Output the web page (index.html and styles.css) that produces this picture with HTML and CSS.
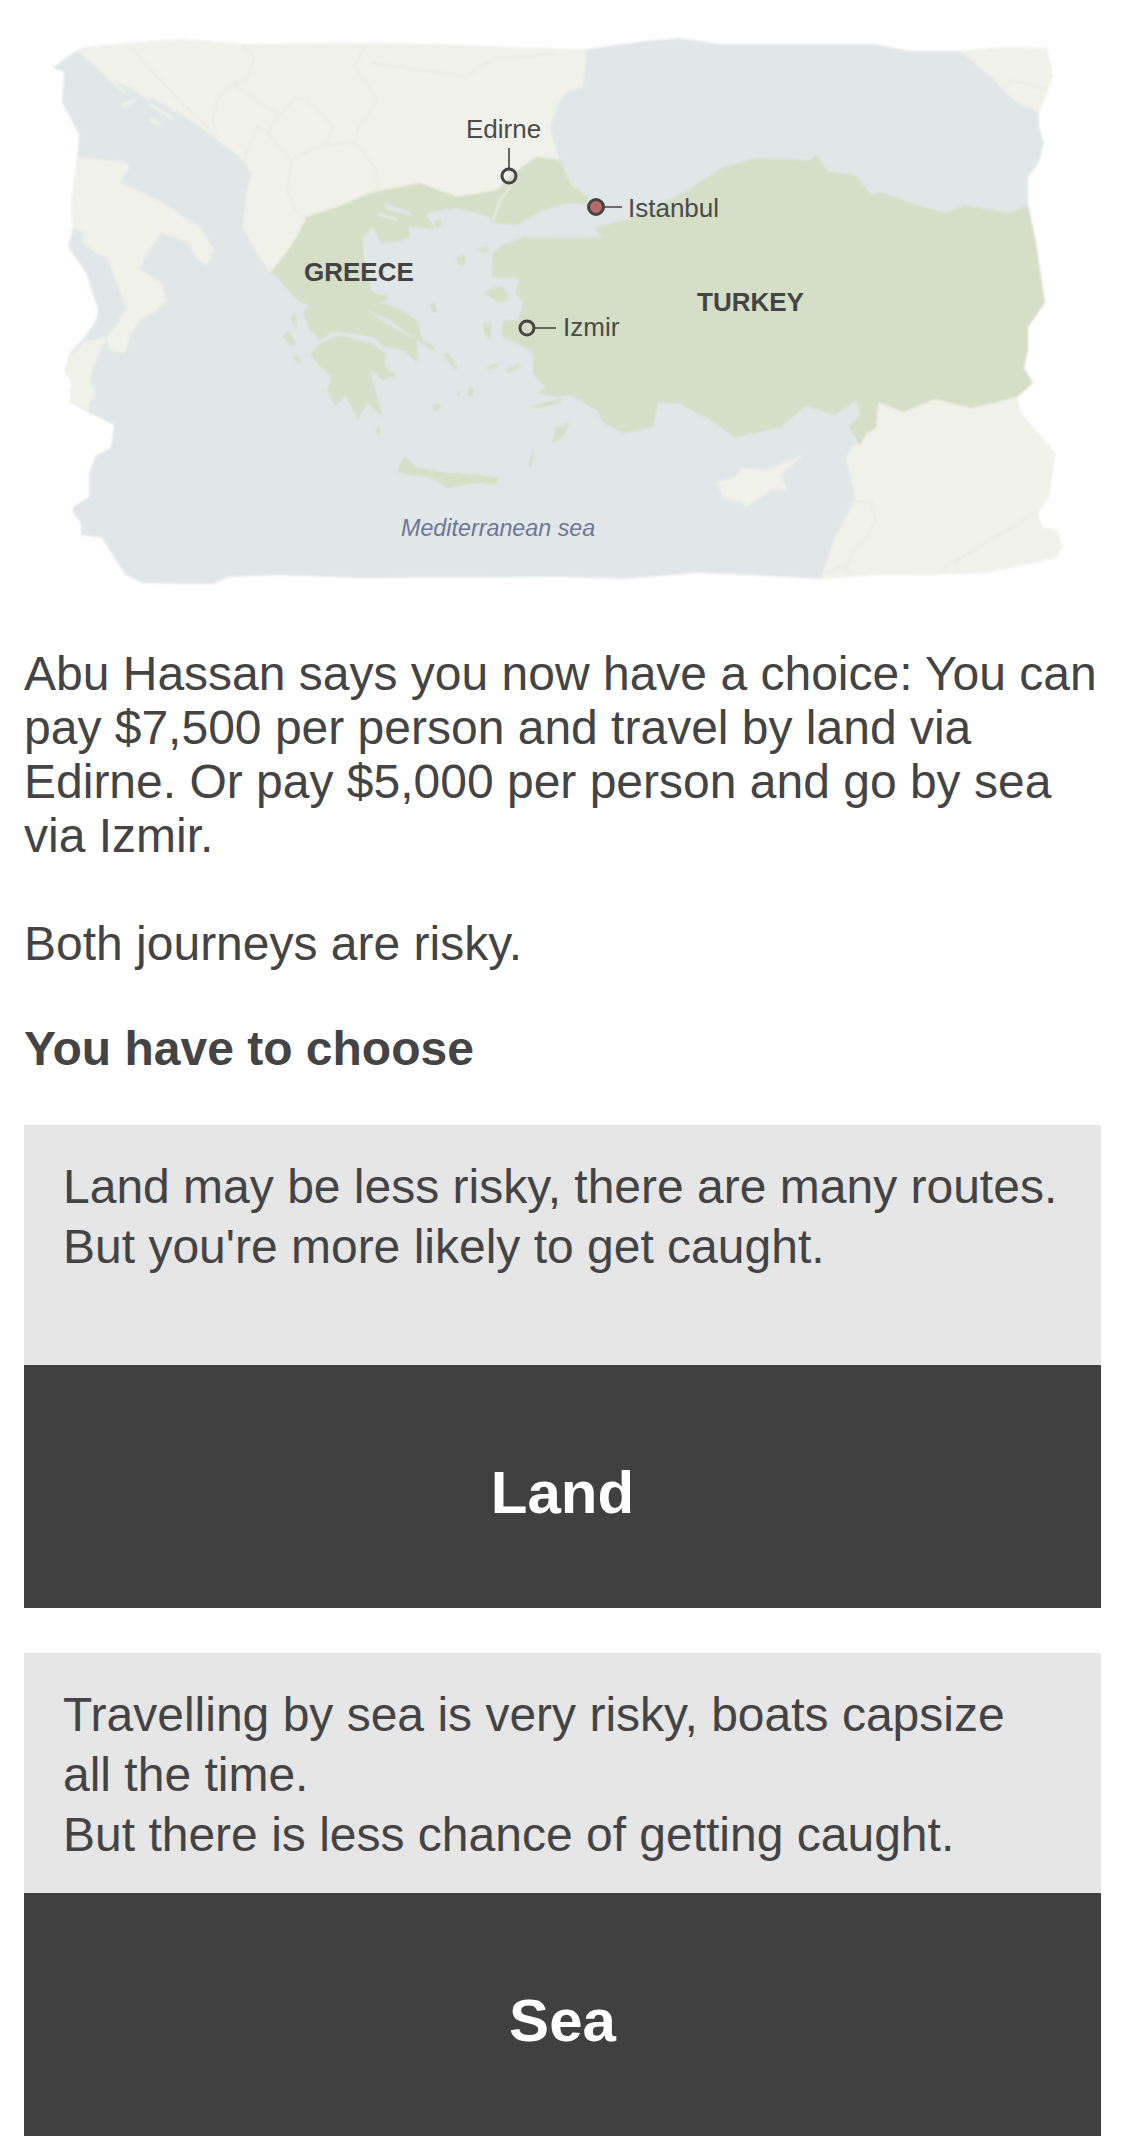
FILE: index.html
```html
<!DOCTYPE html>
<html lang="en">
<head>
<meta charset="utf-8">
<title>You have to choose</title>
<link rel="stylesheet" href="styles.css">
</head>
<body>
<figure class="map">
<svg class="map-svg" viewBox="0 0 1125 620" width="1125" height="620" role="img" aria-label="Map of Greece and Turkey">
<defs><filter id="soft" x="-2%" y="-2%" width="104%" height="104%"><feGaussianBlur stdDeviation="0.8"/></filter></defs>
<g filter="url(#soft)">
<path class="sea" d="M52 68L77 50L86 47L179 39L243 44L364 43L429 44L560 49L587 49L646 41L678 38L721 44L874 44L910 51L960 51L1006 47L1047 48L1053 77L1039 112L1039 127L1044 143L1039 163L1028 177L1028 205L1035 237L1045 303L1028 327L1028 350L1024 368L1033 383L1017 397L1021 413L1055 453L1049 497L1038 513L1042 527L1057 530L1062 547L1056 558L985 573L917 575L874 575L821 579L749 575L696 573L624 579L560 577L357 578L279 575L229 577L214 584L143 583L125 575L102 538L81 535L81 523L73 513L73 507L89 497L89 473L96 455L111 448L114 425L89 413L70 402L71 380L64 372L70 353L84 338L96 320L98 310L86 273L68 247L73 227L71 207L77 157L79 135L62 102L64 72Z"/>
<path class="land" d="M77 157L125 162L129 167L120 182L161 202L200 227L214 250L207 265L196 258L189 243L161 233L143 260L141 270L162 283L166 302L157 310L139 320L130 337L125 353L109 350L107 337L118 323L123 313L127 310L118 287L107 257L96 253L82 242L84 233L73 227L71 207Z"/>
<path class="land" d="M107 337L84 342L70 357L64 372L71 380L70 400L89 412L89 403L96 395L91 383L93 367Z"/>
<path class="land" d="M77 50L86 47L179 39L243 44L364 43L429 44L560 49L587 49L583 87L567 92L560 100L550 127L554 143L560 160L536 157L511 175L497 190L457 197L420 183L370 193L337 207L307 217L297 237L283 257L270 273L257 253L243 227L246 193L252 173L243 160L214 137L186 117L150 97L107 77Z"/>
<path class="land" d="M960 51L1006 47L1047 48L1053 77L1039 112L1021 105L1010 97L994 80L971 60Z"/>
<path class="land" d="M1017 397L1021 413L1055 453L1049 497L1038 513L1042 527L1057 530L1062 547L1056 558L985 573L917 575L874 575L821 579L835 537L855 500L851 477L846 460L853 445L860 445L867 433L876 428L878 402L903 412L935 399L971 408Z"/>
<path class="land" d="M717 482L735 477L742 468L767 470L803 455L781 475L787 490L771 490L746 507L742 502L724 498Z"/>
<path class="land-line" d="M107 77L125 92M130 85L150 100M150 105L172 118M122 106L136 100M150 120L160 124"/>
<path class="green" d="M270 273L283 257L297 237L307 217L337 207L370 193L420 183L457 197L497 190L511 175L536 157L560 160L571 185L589 197L585 205L570 203L543 210L517 225L492 223L490 217L457 208L433 212L407 220L410 237L397 242L380 243L373 227L363 237L363 253L372 292L390 297L383 302L362 308L393 327L403 333L417 340L417 363L403 350L383 347L373 337L347 333L333 332L320 340L310 330L303 313L308 305L297 300L277 277Z"/>
<path class="green" d="M370 195L420 205L435 230L400 225L365 215Z"/>
<path class="sea" d="M384 203L410 212L412 216L386 209ZM378 212L398 219L396 221L378 216Z"/>
<path class="green" d="M383 303L397 308L417 320L423 340L435 347L433 351L417 340L403 330L390 320L370 312L362 308Z"/>
<path class="green" d="M310 355L320 343L340 335L370 343L385 353L385 367L397 375L383 380L370 370L383 418L367 403L358 420L345 395L335 407L327 390L332 377L320 367Z"/>
<path class="green" d="M398 473L400 463L405 457L417 467L443 472L480 475L498 477L497 485L477 483L447 488L430 477L410 475Z"/>
<path class="green" d="M624 220L631 218L685 192L721 168L756 158L810 160L817 155L828 172L856 175L871 195L881 192L917 205L946 213L964 205L1010 213L1028 205L1035 237L1045 303L1028 327L1028 350L1024 368L1033 383L1017 397L971 408L935 399L903 412L878 402L876 428L867 433L860 445L849 427L860 415L856 400L835 415L806 406L781 427L735 438L714 422L678 403L658 403L653 427L624 433L603 423L596 410L570 395L557 397L537 393L545 388L533 373L533 353L517 343L502 337L503 320L518 320L523 303L515 292L520 278L492 277L493 253L503 245L523 237L570 238L603 237L594 228Z"/>
<path class="green" d="M483 292L502 285L510 300L497 302ZM483 323L492 323L490 340L485 335ZM553 443L555 428L570 422L563 437ZM433 222L440 219L443 225L436 228ZM478 250L488 246L488 252L480 253ZM455 258L465 255L466 264L459 266ZM430 305L435 303L438 312L432 312ZM443 354L448 352L458 368L454 370ZM487 367L497 363L498 366L488 370ZM468 388L473 386L473 396L468 397ZM456 394L462 390L458 398ZM433 405L441 403L439 411L432 410ZM527 407L545 402L563 398L560 403L540 408ZM528 467L533 447L534 456L531 467ZM283 337L288 330L297 345L289 345ZM293 357L298 355L302 363L296 362ZM376 426L381 428L380 435L376 434ZM290 318L296 312L296 328ZM505 370L520 363L521 367L508 373Z"/>
<path class="border" d="M130 48L182 103L214 133M243 45L255 57L246 82L232 83L218 97L212 120L216 132M232 83L279 115L296 97L307 100L334 127L323 145L354 142L375 167L377 190M364 47L355 67L377 100L359 127L354 142M371 63L436 72L464 77L493 60L560 53M243 163L257 127L268 133L279 115M268 133L291 160L288 193L296 212L307 217M291 160L314 148L323 145M1001 90L1013 80L1047 90M944 568L1035 513M956 563L958 570M855 503L871 500L876 520L867 537L855 547L847 567L849 575M825 574L847 564"/>
<path class="river" d="M511 186L500 200L493 221"/>
</g>
<g class="leader">
<path d="M509 148V168M603 207H622M535 328H556"/>
<circle class="pin" cx="509" cy="176" r="7"/>
<circle class="pin pin-capital" cx="596" cy="207" r="7.5"/>
<circle class="pin" cx="527" cy="328" r="7"/>
</g>
<text class="city" x="466" y="138">Edirne</text>
<text class="city" x="628" y="217">Istanbul</text>
<text class="city" x="563" y="336">Izmir</text>
<text class="country" x="304" y="281">GREECE</text>
<text class="country" x="697" y="311">TURKEY</text>
<text class="water" x="401" y="536">Mediterranean sea</text>
</svg>
</figure>
<main class="content">
<p class="intro">Abu Hassan says you now have a choice: You can pay $7,500 per person and travel by land via Edirne. Or pay $5,000 per person and go by sea via Izmir.<br><br>Both journeys are risky.</p>
<h2 class="heading">You have to choose</h2>
<section class="choice">
<p class="choice-text">Land may be less risky, there are many routes.<br>But you're more likely to get caught.</p>
<button class="choice-button" type="button">Land</button>
</section>
<section class="choice">
<p class="choice-text">Travelling by sea is very risky, boats capsize all the time.<br>But there is less chance of getting caught.</p>
<button class="choice-button" type="button">Sea</button>
</section>
</main>
</body>
</html>
```
FILE: styles.css
```css
* { box-sizing: border-box; }
html, body { margin: 0; padding: 0; background: #fff; }
body { font-family: "Liberation Sans", Arial, sans-serif; color: #444; }
.map { margin: 0; height: 647px; }
.map-svg { display: block; }
.sea { fill: #e1e7e8; }
.land { fill: #f0f2e9; }
.land-line { fill: none; stroke: #f0f2e9; stroke-width: 3; }
.green { fill: #d5dec7; }
.border { fill: none; stroke: #e5e9e4; stroke-width: 1.5; }
.river { fill: none; stroke: #f0f2e9; stroke-width: 1.5; }
.leader path { fill: none; stroke: #444; stroke-width: 1.6; }
.pin { fill: none; stroke: #444; stroke-width: 3; }
.pin-capital { fill: #b86a6c; }
.city { font-size: 26px; fill: #4a4a4a; }
.country { font-size: 26px; font-weight: 700; fill: #444; }
.water { font-size: 23.3px; font-style: italic; fill: #6b7796; }
.content { padding: 0 24px; }
.intro { margin: 0; font-size: 48px; line-height: 54px; }
.heading { margin: 51px 0 49px; font-size: 48px; line-height: 54px; font-weight: 700; }
.choice { margin-bottom: 45px; }
.choice:last-child { margin-bottom: 0; }
.choice-text { margin: 0; height: 240px; background: #e6e6e6; padding: 32px 39px 0; font-size: 48px; line-height: 60px; }
.choice-button { display: flex; align-items: center; justify-content: center; width: 100%; height: 243px; padding: 12px 0 0; border: 0; border-radius: 0; background: #404040; color: #fff; font: 700 60px "Liberation Sans", Arial, sans-serif; }
```
